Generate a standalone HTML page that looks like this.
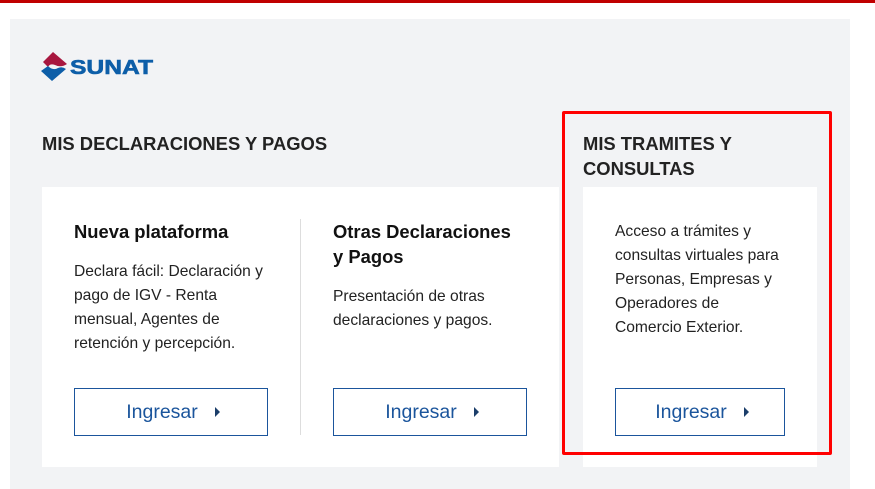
<!DOCTYPE html>
<html><head><meta charset="utf-8"><style>
*{margin:0;padding:0;box-sizing:border-box}
body{width:875px;height:484px;background:#fff;font-family:"Liberation Sans",sans-serif;position:relative;overflow:hidden;color:#222}
.a{position:absolute}
.top{left:0;top:0;width:875px;height:3px;background:#c00000}
.panel{left:10px;top:19px;width:840px;height:470px;background:#f2f3f5}
.card{background:#fff}
h2{position:absolute;font-size:18.4px;font-weight:bold;color:#222;line-height:25px}
h3{position:absolute;font-size:18.4px;font-weight:bold;color:#111;line-height:25px}
p{position:absolute;font-size:15.6px;line-height:24px;color:#222}
.btn{position:absolute;height:48px;border:1px solid #1b559c;color:#1b559c;font-size:19.5px;display:flex;align-items:center;justify-content:center;background:#fff}
.btn span.t{margin-left:4px;margin-right:17px}
.btn span.c{width:0;height:0;border-top:5px solid transparent;border-bottom:5px solid transparent;border-left:5px solid #1b3e6a}
</style></head><body>
<div class="a top"></div>
<div class="a panel"></div>
<svg class="a" style="left:40px;top:50px" width="116" height="32" viewBox="0 0 116 32">
<path d="M13 2 L27 14 Q21 18 15 15 Q10 13 8 17 L3 12 Z" fill="#a8173f"/>
<path d="M1 21 L8 16 Q13 21 18 18 Q22 16 26 19 L12 31 Z" fill="#0d5ea8"/>
<text x="30" y="24" font-family="Liberation Sans" font-weight="bold" font-size="20" textLength="83" lengthAdjust="spacingAndGlyphs" fill="#0d5ea8" stroke="#0d5ea8" stroke-width="0.6">SUNAT</text>
</svg>
<h2 style="left:42px;top:131px">MIS DECLARACIONES Y PAGOS</h2>
<h2 style="left:583px;top:131px">MIS TRAMITES Y<br>CONSULTAS</h2>
<div class="a card" style="left:42px;top:187px;width:517px;height:280px"></div>
<div class="a card" style="left:583px;top:187px;width:234px;height:280px"></div>
<div class="a" style="left:300px;top:219px;width:1px;height:216px;background:#ddd"></div>
<h3 style="left:74px;top:219px">Nueva plataforma</h3>
<p style="left:74px;top:260px">Declara fácil: Declaración y<br>pago de IGV - Renta<br>mensual, Agentes de<br>retención y percepción.</p>
<h3 style="left:333px;top:219px">Otras Declaraciones<br>y Pagos</h3>
<p style="left:333px;top:285px">Presentación de otras<br>declaraciones y pagos.</p>
<p style="left:615px;top:220px">Acceso a trámites y<br>consultas virtuales para<br>Personas, Empresas y<br>Operadores de<br>Comercio Exterior.</p>
<div class="btn" style="left:74px;top:388px;width:194px"><span class="t">Ingresar</span><span class="c"></span></div>
<div class="btn" style="left:333px;top:388px;width:194px"><span class="t">Ingresar</span><span class="c"></span></div>
<div class="btn" style="left:615px;top:388px;width:170px"><span class="t">Ingresar</span><span class="c"></span></div>
<div class="a" style="left:562px;top:111px;width:270px;height:344px;border:3px solid #f00;border-radius:2px"></div>
</body></html>
